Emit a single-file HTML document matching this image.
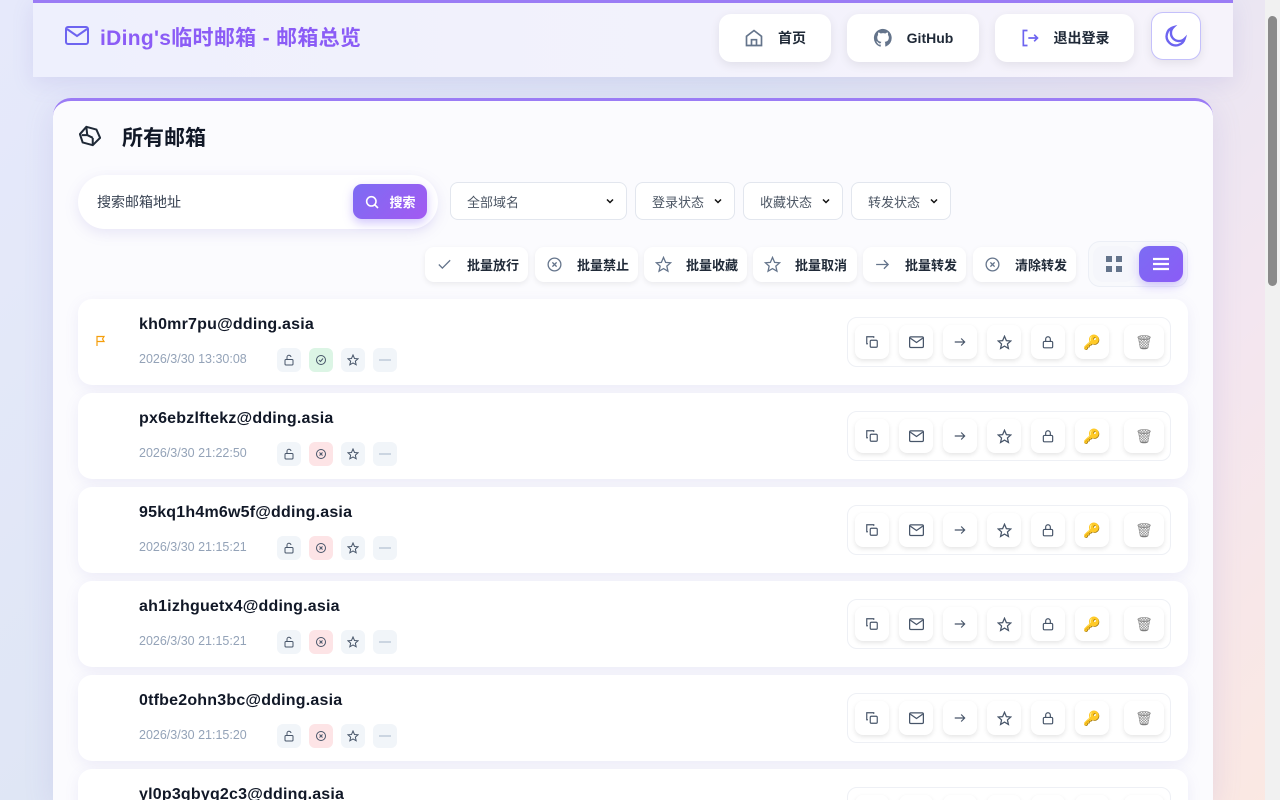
<!DOCTYPE html>
<html><head><meta charset="utf-8"><style>
*{box-sizing:border-box;margin:0;padding:0}
html,body{width:1280px;height:800px;overflow:hidden}
body{font-family:"Liberation Sans","Noto Sans CJK SC",sans-serif;background:linear-gradient(135deg,#e6e9fb 0%,#dfe6f5 40%,#f3e6f0 75%,#fbe8e2 100%);position:relative;color:#1f2937}
.abs{position:absolute}
.header{left:33px;top:0;width:1200px;height:77px;background:linear-gradient(90deg,#eef0fd,#f6f3fb);border-top:3px solid #9b7cf5;box-shadow:0 6px 20px rgba(120,110,200,.15)}
.title{left:100px;top:22px;font-size:21px;font-weight:bold;color:#8b5cf6;letter-spacing:.3px}
.nb{top:14px;height:48px;background:#fff;border-radius:12px;box-shadow:0 3px 10px rgba(0,0,0,.08);display:flex;align-items:center;justify-content:center;gap:14px;font-size:14px;font-weight:bold;color:#1f2937}
.card{left:53px;top:98px;width:1160px;height:702px;background:#fbfbfe;border-radius:18px 18px 0 0;border-top:3px solid #9b7cf5;box-shadow:0 8px 30px rgba(120,110,200,.15)}
.sel{top:182px;height:38px;border:1px solid #e2e6ee;border-radius:8px;background:#fff;font-size:13px;color:#4b5563;display:flex;align-items:center;padding:0 10px 0 16px;justify-content:space-between}
.bb{top:247px;height:35px;background:#fff;border-radius:9px;box-shadow:0 2px 6px rgba(0,0,0,.07);display:flex;align-items:center;font-size:13px;font-weight:bold;color:#1f2937;padding-left:11px;gap:14px}
.row{left:78px;width:1110px;height:86px;background:#fff;border-radius:14px;box-shadow:0 4px 14px rgba(120,110,200,.1)}
.em{left:61px;top:17px;font-size:16px;font-weight:bold;color:#111827;letter-spacing:.2px}
.dt{left:61px;top:53px;font-size:12.5px;color:#94a3b8}
.tg{top:49px;width:24px;height:24px;border-radius:6px;background:#f1f5f9;display:flex;align-items:center;justify-content:center}
.grp{left:769px;top:18px;width:324px;height:50px;border:1px solid #eef0f5;border-radius:10px}
.ab{top:7px;width:34px;height:34px;background:#fff;border-radius:8px;box-shadow:0 2px 5px rgba(0,0,0,.1);display:flex;align-items:center;justify-content:center}
svg{display:block}
</style></head><body>
<div class="abs header"></div>
<svg class="abs" style="left:65px;top:26px" width="24" height="20" viewBox="0 0 24 20" fill="none" stroke="#6d64f0" stroke-width="2"><rect x="1" y="1" width="22" height="17" rx="2"/><path d="M2 3l10 7 10-7"/></svg>
<div class="abs title">iDing's临时邮箱 - 邮箱总览</div>
<div class="abs nb" style="left:719px;width:112px"><svg width="20" height="20" viewBox="0 0 24 24" fill="none" stroke="#64748b" stroke-width="2"><path d="M3 10l9-7 9 7v11H3z"/><path d="M9 21v-7h6v7"/></svg>首页</div>
<div class="abs nb" style="left:847px;width:132px"><svg width="20" height="20" viewBox="0 0 24 24" fill="#64748b"><path d="M12 1a11 11 0 0 0-3.5 21.4c.6.1.8-.2.8-.5v-2c-3 .6-3.7-1.4-3.700-1.400-.5-1.2-1.2-1.6-1.2-1.6-1-.7.1-.7.1-.7 1.1.1 1.7 1.1 1.7 1.1 1 1.7 2.6 1.2 3.2.9.1-.7.4-1.2.7-1.5-2.4-.3-5-1.2-5-5.4 0-1.2.4-2.2 1.1-2.9-.1-.3-.5-1.4.1-2.9 0 0 .9-.3 3 1.1a10 10 0 0 1 5.5 0c2.1-1.4 3-1.1 3-1.100.6 1.5.2 2.6.1 2.9.7.8 1.1 1.7 1.1 2.9 0 4.2-2.6 5.1-5 5.4.4.3.7 1 .7 2v3c0 .3.2.6.8.5A11 11 0 0 0 12 1z"/></svg>GitHub</div>
<div class="abs nb" style="left:995px;width:139px"><svg width="20" height="20" viewBox="0 0 24 24" fill="none" stroke="#6d64f0" stroke-width="2"><path d="M9 3H4v18h5M10 12h11M17 8l4 4-4 4"/></svg>退出登录</div>
<div class="abs nb" style="left:1151px;width:50px;top:12px;border:1px solid #c4c0fb"><svg width="26" height="26" viewBox="0 0 24 24" fill="none" stroke="#6d64f0" stroke-width="2.2"><path d="M20 14.5A8.5 8.5 0 1 1 9.5 4a7 7 0 0 0 10.5 10.5z"/></svg></div>
<div class="abs" style="right:0;top:0;width:15px;height:800px;background:#f1f1f1"></div>
<div class="abs" style="right:3px;top:16px;width:9px;height:270px;background:#8a8a8a;border-radius:5px"></div>

<div class="abs card"></div>
<svg class="abs" style="left:79px;top:125px" width="22" height="22" viewBox="0 0 24 24" fill="none" stroke="#1f2937" stroke-width="2.2"><path d="M8 2l11 3 4 9-8 8-11-3-3-9z"/><path d="M8 2l1 9 6 3M9 11l-6 0M15 14l0 8"/></svg>
<div class="abs" style="left:122px;top:122px;font-size:21px;font-weight:bold;color:#111827">所有邮箱</div>
<div class="abs" style="left:78px;top:175px;width:360px;height:54px;background:#fff;border-radius:27px;box-shadow:0 4px 14px rgba(120,110,200,.15)"></div>
<div class="abs" style="left:97px;top:192px;font-size:14px;color:#374151">搜索邮箱地址</div>
<div class="abs" style="left:353px;top:184px;width:74px;height:35px;border-radius:9px;background:linear-gradient(135deg,#7c6cf3,#a35af2);display:flex;align-items:center;justify-content:center;gap:9px;color:#fff;font-size:13px;font-weight:bold;box-shadow:0 4px 10px rgba(124,92,246,.35)"><svg width="16" height="16" viewBox="0 0 24 24" fill="none" stroke="#fff" stroke-width="2.4"><circle cx="11" cy="11" r="7"/><path d="M16 16l5 5"/></svg>搜索</div>
<div id="sels"></div>

<div id="bbs"></div>
<div class="abs" style="left:1088px;top:241px;width:100px;height:46px;border:1px solid #eceff6;border-radius:12px;background:#f8f9fc"></div>
<div class="abs" style="left:1093px;top:246px;width:42px;height:36px;border-radius:10px;background:#f5f6fb;display:flex;align-items:center;justify-content:center"><svg width="16" height="16" viewBox="0 0 16 16" fill="#64748b"><rect width="6" height="6"/><rect x="10" width="6" height="6"/><rect y="10" width="6" height="6"/><rect x="10" y="10" width="6" height="6"/></svg></div>
<div class="abs" style="left:1139px;top:246px;width:44px;height:36px;border-radius:10px;background:linear-gradient(135deg,#7c6cf3,#8b5cf6);display:flex;align-items:center;justify-content:center;box-shadow:0 4px 10px rgba(124,92,246,.35)"><svg width="18" height="14" viewBox="0 0 18 14" stroke="#fff" stroke-width="2.2"><path d="M1 2h16M1 7h16M1 12h16"/></svg></div>

<div id="rows"></div>
<script>
var chev='<svg width="12" height="12" viewBox="0 0 24 24" fill="none" stroke="#111" stroke-width="3"><path d="M6 9l6 6 6-6"/></svg>';
var s='';[[450,177,'全部域名'],[635,100,'登录状态'],[743,100,'收藏状态'],[851,100,'转发状态']].forEach(function(a){s+='<div class="abs sel" style="left:'+a[0]+'px;width:'+a[1]+'px">'+a[2]+chev+'</div>'});
document.getElementById('sels').innerHTML=s;
var g='stroke="#475569" stroke-width="2" fill="none"';
var gi='stroke="#64748b" stroke-width="1.8" fill="none"';
var bi={ok:'<path d="M4 12l5 5L20 6"/>',x:'<circle cx="12" cy="12" r="9"/><path d="M9 9l6 6M15 9l-6 6"/>',star:'<path d="M12 2l3 7 7 .6-5.3 4.7 1.6 7.2L12 17.8 5.7 21.5l1.6-7.2L2 9.6 9 9z"/>',arr:'<path d="M3 12h17M14 6l6 6-6 6"/>'};
var b='';[[425,103,'ok','批量放行'],[535,103,'x','批量禁止'],[644,103,'star','批量收藏'],[753,104,'star','批量取消'],[863,103,'arr','批量转发'],[973,103,'x','清除转发']].forEach(function(a){b+='<div class="abs bb" style="left:'+a[0]+'px;width:'+a[1]+'px"><svg width="17" height="17" viewBox="0 0 24 24" '+gi+'>'+bi[a[2]]+'</svg>'+a[3]+'</div>'});
document.getElementById('bbs').innerHTML=b;
var data=[["kh0mr7pu@dding.asia","2026/3/30 13:30:08",1],["px6ebzlftekz@dding.asia","2026/3/30 21:22:50",0],["95kq1h4m6w5f@dding.asia","2026/3/30 21:15:21",0],["ah1izhguetx4@dding.asia","2026/3/30 21:15:21",0],["0tfbe2ohn3bc@dding.asia","2026/3/30 21:15:20",0],["yl0p3gbyq2c3@dding.asia","",0]];
var icons=['<svg width="14" height="14" viewBox="0 0 24 24" '+g+'><rect x="9" y="9" width="12" height="12" rx="2"/><path d="M5 15H3V3h12v2"/></svg>','<svg width="15" height="13" viewBox="0 0 24 20" '+g+'><rect x="1" y="1" width="22" height="17" rx="2"/><path d="M2 3l10 7 10-7"/></svg>','<svg width="14" height="14" viewBox="0 0 24 24" '+g+'><path d="M3 12h17M14 6l6 6-6 6"/></svg>','<svg width="15" height="15" viewBox="0 0 24 24" '+g+'><path d="M12 2l3 7 7 .6-5.3 4.7 1.6 7.2L12 17.8 5.7 21.5l1.6-7.2L2 9.6 9 9z"/></svg>','<svg width="14" height="14" viewBox="0 0 24 24" '+g+'><rect x="4" y="11" width="16" height="11" rx="2"/><path d="M8 11V7a4 4 0 0 1 8 0v4"/></svg>','<span style="font-size:14px">🔑</span>','<span style="font-size:14px;filter:grayscale(1);opacity:.6">🗑</span>'];
var xs=[7,51,95,139,183,227,276],h='';
data.forEach(function(d,i){var y=299+i*94;h+='<div class="abs row" style="top:'+y+'px">';
if(d[2])h+='<svg class="abs" style="left:17px;top:36px" width="12" height="12" viewBox="0 0 24 24" fill="none" stroke="#f59e0b" stroke-width="2.4"><path d="M4 22V3h14l-3 5 3 5H4"/></svg>';
h+='<div class="abs em">'+d[0]+'</div><div class="abs dt">'+d[1]+'</div>';
h+='<div class="abs tg" style="left:199px"><svg width="12" height="12" viewBox="0 0 24 24" '+g+'><rect x="4" y="11" width="16" height="11" rx="2"/><path d="M8 11V7a4 4 0 0 1 8-1"/></svg></div>';
h+='<div class="abs tg" style="left:231px;background:'+(d[2]?'#dcf5e5':'#fde4e6')+'"><svg width="12" height="12" viewBox="0 0 24 24" '+g+'><circle cx="12" cy="12" r="9"/>'+(d[2]?'<path d="M8 12l3 3 5-6"/>':'<path d="M9 9l6 6M15 9l-6 6"/>')+'</svg></div>';
h+='<div class="abs tg" style="left:263px"><svg width="12" height="12" viewBox="0 0 24 24" '+g+'><path d="M12 2l3 7 7 .6-5.3 4.7 1.6 7.2L12 17.8 5.7 21.5l1.6-7.2L2 9.6 9 9z"/></svg></div>';
h+='<div class="abs tg" style="left:295px"><div style="width:12px;height:2px;background:#cbd5e1"></div></div>';
h+='<div class="abs grp">';xs.forEach(function(x,k){h+='<div class="abs ab" style="left:'+x+'px;'+(k==6?'width:40px':'')+'">'+icons[k]+'</div>'});h+='</div></div>';});
document.getElementById('rows').innerHTML=h;
</script>
</body></html>
